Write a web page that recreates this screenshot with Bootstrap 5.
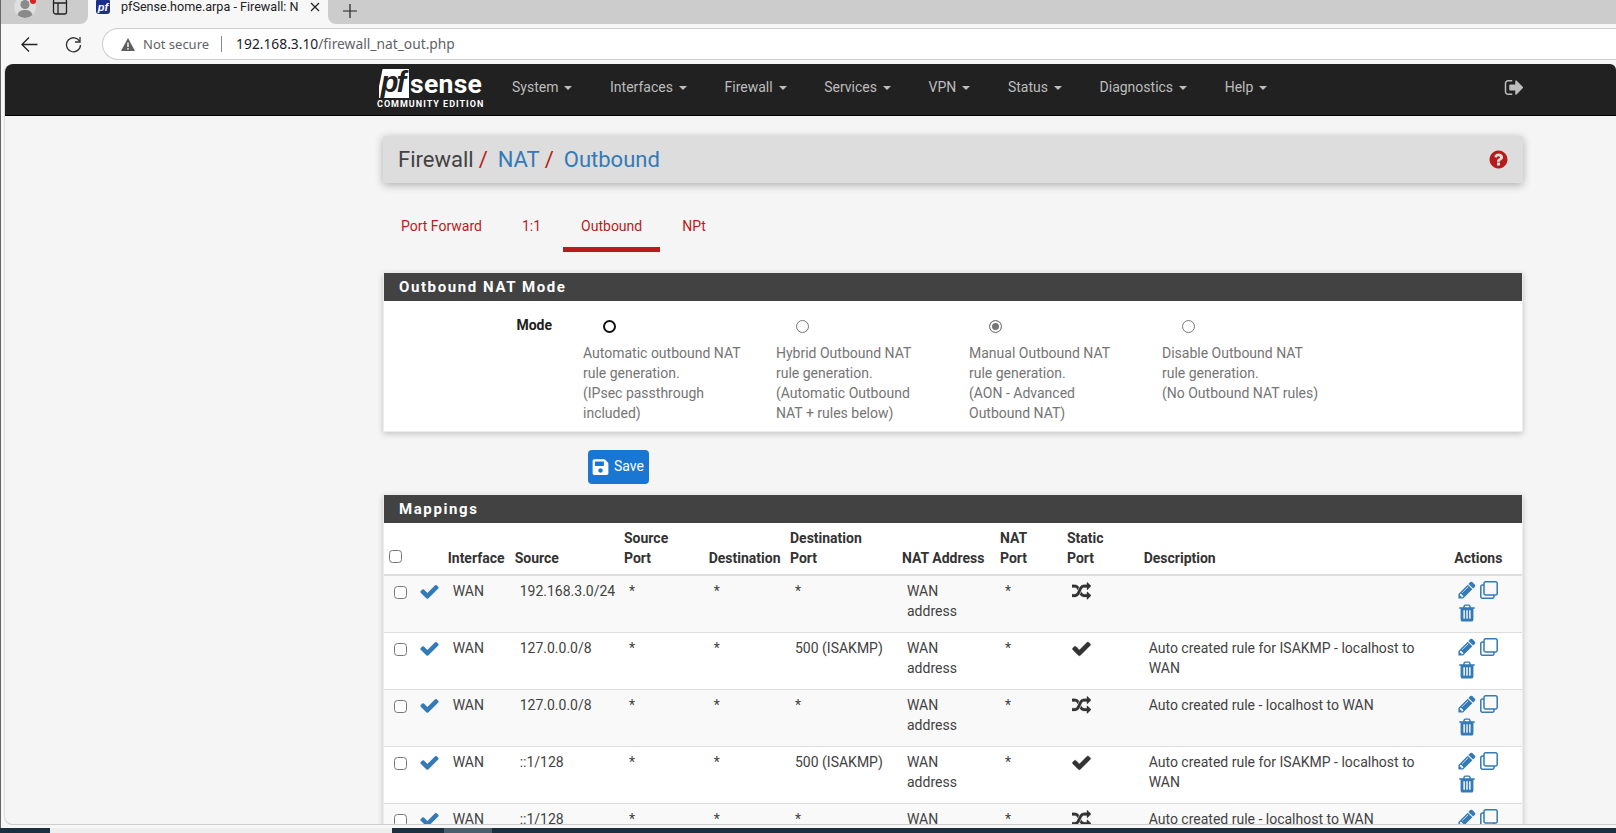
<!DOCTYPE html>
<html lang="en">
<head>
<meta charset="utf-8">
<title>pfSense.home.arpa - Firewall: NAT: Outbound</title>
<link href="https://cdn.jsdelivr.net/npm/bootstrap@5.3.0/dist/css/bootstrap.min.css" rel="stylesheet">
<style>
html,body{height:100%}
body{background:#f7f7f7;font-family:Roboto,"Liberation Sans",sans-serif;font-size:14px;line-height:20px;color:#424242;overflow:hidden}
.shell{height:833px;border-left:1px solid #666}
/* browser chrome */
.tabstrip{height:24px;background:#f7f7f7;flex:none}
.strip-left{width:87px;background:#ccc;border-bottom-right-radius:8px;position:relative;overflow:hidden}
.strip-right{background:#ccc;border-bottom-left-radius:8px;padding-left:15px}
.strip-tab{width:240px;padding-left:8px;font-family:Roboto,sans-serif;font-size:12.6px;line-height:14px;color:#222;height:14px}
.tab-fav{width:14px;height:14px;background:#1c2f86;border-radius:1px 1px 3px 3px;color:#fff;font:italic bold 11px/14px "Liberation Sans",sans-serif;text-align:center;margin-right:11px;flex:none}
.tab-title{width:177px;white-space:nowrap;overflow:hidden;margin-right:8px}
.avatar{position:absolute;left:12px;top:-4px}
.side-ico{position:absolute;left:51px;top:-3px}
.red-dot{position:absolute;left:29px;top:-2px;width:6px;height:6px;border-radius:50%;background:#e02020}
.toolbar{height:40px;padding-top:4px;flex:none;background:#f7f7f7}
.tool-ico{width:17px;height:17px;flex:none}
.tool-back{margin:0 27px 0 20px}
.urlpill{height:32px;flex:1;margin-left:20px;background:#fff;border:1px solid #ccc;border-right:0;border-radius:16px 0 0 16px;padding-left:18px;font-family:"Noto Sans","Open Sans",sans-serif;font-size:13px;color:#5f6368;white-space:nowrap}
.url-sep{width:1px;height:16px;background:#888;margin:0 14px 0 12px}
.url-path{font-size:13.8px}
.url-host{color:#1a1a2a}
/* page window */
.pagewin{flex:1;min-height:0;margin-left:4px;background:#f5f5f5;overflow:hidden;border-bottom:1px solid #ccc;border-radius:8px 0 0 8px;box-shadow:-1px 0 0 #ddd}
.pf-nav{height:52px;background:#212121;border-bottom:1px solid #000;padding:0;flex-wrap:nowrap;flex:none}
.pf-brand{width:106px;margin:0 0 0 372px;padding:0;color:#fff;display:block;flex:none}
.brand-top{height:29px;margin-top:-1px}
.pf-box{width:30px;height:29px;background:#fff;color:#212121;font:italic bold 29px/27px "Liberation Sans",sans-serif;letter-spacing:-2px;clip-path:polygon(12% 0,100% 0,100% 100%,0 100%,0 60%);text-align:center;padding-right:3px;margin-left:2px}
.pf-sense{font:700 26.5px/29px Roboto,sans-serif;color:#fff;letter-spacing:.3px;margin-left:1px}
.pf-edition{font:700 9px/10px Roboto,sans-serif;letter-spacing:1px;color:#fff;white-space:nowrap;margin-top:1px}
.pf-menu{margin:0 0 5px 29px;gap:37.6px;flex-direction:row}
.pf-menu .nav-link{color:#bdbdbd;padding:0;font-size:14px;white-space:nowrap}
.pf-menu .dropdown-toggle::after{margin-left:6px;vertical-align:2px;border-top-width:4px;border-right-width:4px;border-left-width:4px}
.pf-logout{position:absolute;left:1498.5px;top:13px}
.pf-main{width:1140px;margin-left:378px;padding-top:20px}
.crumbbar{height:47px;background:#ddd;box-shadow:0 2px 8px rgba(0,0,0,.3);padding:0 15px;font-size:22px;border-radius:2px}
.crumb-sep{color:#b71c1c;margin:0 10px 0 5px}
.crumbbar a{color:#337ab7;text-decoration:none}
.help-ico{margin-right:-1px}
.pf-tabs{margin-top:19px;gap:4px;height:50px;border:0}
.pf-tabs .nav-link{color:#b71c1c;padding:14px 18px 0;height:50px;font-size:14px;border-radius:0}
.pf-tabs .nav-link.active{border-bottom:5px solid #b71c1c;color:#b71c1c;background:none}
.pf-panel{border:1px solid #ececec;border-radius:0;background:#fff;box-shadow:0 2px 6px rgba(0,0,0,.2)}
.pf-head{height:28px;background:#424242;color:#fff;font-weight:700;font-size:15px;line-height:28px;letter-spacing:1.6px;padding:0 0 0 15px;border:0;border-radius:0!important}
.mode-panel{margin-top:20px}
.mode-body{height:130px;padding:14px 0 0}
.mode-label{width:168px;text-align:right;font-weight:700;color:#212121;line-height:20px;flex:none}
.mode-opts{margin-left:31px}
.mode-col{width:193px;color:#757575;font-size:14px;white-space:nowrap}
.mode-radio{display:block;width:13px;height:13px;margin:5px 0 10px 20px;border:1px solid #767676;background-color:#fff;float:none}
.mode-radio:checked{background-color:#777;background-image:none;border-color:#777;box-shadow:inset 0 0 0 2px #fff}
.radio-focus{border:2px solid #111}
.save-row{margin:18px 0 10px 205px;height:34px}
.save-btn{width:61px;height:34px;background:#1976d2;border:0;border-radius:4px;padding:0 0 0 4px;gap:5px;font-size:14px;color:#fff}
.save-btn span{margin-top:-2px}
.map-table{table-layout:fixed;margin:0;width:1138px;color:#424242;--bs-table-striped-bg:#f9f9f9;--bs-table-striped-color:#424242;--bs-table-color:#424242;font-size:14px}
.map-table th{vertical-align:bottom;padding:5px 0 6px 5px;border-bottom:2px solid #ddd;color:#333;font-weight:700;height:51px;font-size:14px}
.map-table td{vertical-align:top;padding:5px 0 0 10px;border-bottom:1px solid #ddd;height:57px}
.map-table input{display:block;width:13px;height:13px;margin:0;border:1px solid #767676;border-radius:2.5px;float:none}
.map-table th input{margin:0 0 5px 0}
.map-table td input{margin-top:5px}
.wc1{width:26.6px}.wc2{width:32.1px}.wc3{width:67px}.wc4{width:109.3px}.wc5{width:84.7px}.wc6{width:81.3px}.wc7{width:112px}.wc8{width:98px}.wc9{width:67px}.wc10{width:76.7px}.wc11{width:310.6px}.wc12{width:72.7px}
.act-wrap{width:46px;gap:3px 3px}
.act-wrap .copy-ico{align-self:center}
.icn-blue{color:#337ab7;fill:currentColor}
.icn-dark{color:#333;fill:currentColor;stroke:currentColor;stroke-width:25}
.taskbar{height:5px;background:#1b2f3f;flex:none;margin:3px 0 0 -1px;position:relative}
.task-win{margin-left:50px;width:342px;background:#eee}
.task-act{margin-left:52px;width:48px;background:#4a5f6b}
.map-table td.chk-cell{padding-left:10px}
.map-table td.ok-cell{padding:5px 0 0 8.6px}
.map-table td.act-cell{padding:4px 0 0 8px}
.map-table td.sp-cell{padding:5px 0 0 8.6px}
.map-table td.sr-cell{padding:6px 0 0 9.7px}
.map-table td.desc-cell{padding-right:14px}
</style>
</head>
<body class="m-0">
<svg width="0" height="0" class="position-absolute">
<defs>
<symbol id="i-check" viewBox="0 0 1792 1792"><path d="M1671 566q0 40-28 68l-724 724-136 136q-28 28-68 28t-68-28l-136-136-362-362q-28-28-28-68t28-68l136-136q28-28 68-28t68 28l294 295 656-657q28-28 68-28t68 28l136 136q28 28 28 68z"/></symbol>
<symbol id="i-random" viewBox="0 0 1792 1792"><path d="M666 481q-60 92-137 273-22-45-37-72.5t-40.5-63.5-51-56.5-63-35-81.5-14.5h-224q-14 0-23-9t-9-23v-192q0-14 9-23t23-9h224q250 0 410 225zm1126 799q0 14-9 23l-320 320q-9 9-23 9-13 0-22.5-9.5t-9.5-22.5v-192q-32 0-85 .5t-81 1-73-1-71-5-64-10.5-63-18.5-58-28.5-59-40-55-53.5-56-69.5q59-93 136-273 22 45 37 72.5t40.5 63.5 51 56.5 63 35 81.5 14.5h256v-192q0-14 9-23t23-9q12 0 24 10l319 319q9 9 9 23zm0-896q0 14-9 23l-320 320q-9 9-23 9-13 0-22.5-9.5t-9.5-22.5v-192h-256q-48 0-87 15t-69 45-51 61.5-45 77.5q-32 62-78 171-29 66-49.5 111t-54 105-64 100-74 83-90 68.5-106.5 42-128 16.5h-224q-14 0-23-9t-9-23v-192q0-14 9-23t23-9h224q48 0 87-15t69-45 51-61.5 45-77.5q32-62 78-171 29-66 49.5-111t54-105 64-100 74-83 90-68.5 106.5-42 128-16.5h256v-192q0-14 9-23t23-9q12 0 24 10l319 319q9 9 9 23z"/></symbol>
<symbol id="i-pencil" viewBox="0 0 1792 1792"><path d="M491 1536l91-91-235-235-91 91v107h128v128h107zm523-928q0-22-22-22-10 0-17 7l-542 542q-7 7-7 17 0 22 22 22 10 0 17-7l542-542q7-7 7-17zm-54-192l416 416-832 832h-416v-416zm683 96q0 53-37 90l-166 166-416-416 166-165q36-38 90-38 53 0 91 38l235 234q37 39 37 91z"/></symbol>
<symbol id="i-clone" viewBox="0 0 18 18"><path fill="none" stroke="currentColor" stroke-width="1.5" d="M5.500.8h10.200a1.500 1.500 0 0 1 1.500 1.500v10.200a1.500 1.500 0 0 1-1.500 1.500H5.500a1.500 1.500 0 0 1-1.500-1.500V2.300A1.500 1.500 0 0 1 5.500.8z"/><path fill="none" stroke="currentColor" stroke-width="1.5" d="M4 4H2.300A1.500 1.500 0 0 0 .8 5.500v10.200a1.500 1.500 0 0 0 1.500 1.500h10.200a1.500 1.500 0 0 0 1.500-1.500V14"/></symbol>
<symbol id="i-trash" viewBox="0 0 1792 1792"><path d="M704 1376v-704q0-14-9-23t-23-9h-64q-14 0-23 9t-9 23v704q0 14 9 23t23 9h64q14 0 23-9t9-23zm256 0v-704q0-14-9-23t-23-9h-64q-14 0-23 9t-9 23v704q0 14 9 23t23 9h64q14 0 23-9t9-23zm256 0v-704q0-14-9-23t-23-9h-64q-14 0-23 9t-9 23v704q0 14 9 23t23 9h64q14 0 23-9t9-23zm-544-992h448l-48-117q-7-9-17-11h-317q-10 2-17 11zm928 32v64q0 14-9 23t-23 9h-96v948q0 83-47 143.500t-113 60.500h-832q-66 0-113-58.500t-47-141.500v-952h-96q-14 0-23-9t-9-23v-64q0-14 9-23t23-9h309l70-167q15-37 54-63t79-26h320q40 0 79 26t54 63l70 167h309q14 0 23 9t9 23z"/></symbol>
</defs>
</svg>
<div class="shell d-flex flex-column">
  <div class="tabstrip d-flex overflow-hidden">
    <div class="strip-left">
      <svg class="avatar" width="24" height="22" viewBox="0 0 24 22"><circle cx="12" cy="11" r="11" fill="#dedede"/><circle cx="12" cy="8.500" r="4.500" fill="#8a8a8a"/><path d="M4.500 19c1-4 4-5 7.500-5s6.500 1 7.500 5a11 11 0 0 1-15 0z" fill="#8a8a8a"/></svg>
      <span class="red-dot"></span>
      <svg class="side-ico" width="16" height="18" viewBox="0 0 16 18" fill="none" stroke="#222" stroke-width="1.300"><rect x="1.500" y="2" width="13" height="15" rx="2"/><path d="M6 6v11M1.500 6H14.500"/></svg>
    </div>
    <div class="strip-tab d-flex align-items-center">
      <span class="tab-fav">pf</span>
      <span class="tab-title">pfSense.home.arpa - Firewall: NAT</span>
      <svg width="10" height="10" viewBox="0 0 10 10" fill="none" stroke="#222" stroke-width="1.200" class="ms-1"><path d="M1 1l8 8M9 1l-8 8"/></svg>
    </div>
    <div class="strip-right flex-grow-1">
      <svg width="14" height="14" viewBox="0 0 14 14" fill="none" stroke="#222" stroke-width="1.200"><path d="M7 0v14M0 7h14"/></svg>
    </div>
  </div>
  <div class="toolbar d-flex align-items-start">
    <div class="d-flex align-items-center w-100">
      <svg class="tool-ico tool-back" viewBox="0 0 17 17" fill="none" stroke="#222" stroke-width="1.300"><path d="M16.500 8.500H1M8 1.500L1 8.500l7 7"/></svg>
      <svg class="tool-ico" viewBox="0 0 17 17" fill="none" stroke="#333" stroke-width="1.300"><path d="M14.700 5.500A7 7 0 1 0 15.500 9"/><path d="M15 1v5h-5"/></svg>
      <div class="urlpill d-flex align-items-center">
        <svg width="14" height="13" viewBox="0 0 14 13" class="me-2 flex-shrink-0"><path d="M7 0l7 13H0z" fill="#5f5f5f"/><path d="M6.300 4.500h1.400v4.500H6.300zM6.300 10h1.400v1.400H6.300z" fill="#fff"/></svg>
        <span>Not secure</span><span class="url-sep"></span><span class="url-path"><span class="url-host">192.168.3.10</span>/firewall_nat_out.php</span>
      </div>
    </div>
  </div>
  <div class="pagewin position-relative">
    <nav class="navbar pf-nav d-flex align-items-center justify-content-start rounded-top">
      <a class="navbar-brand pf-brand" href="#">
        <div class="brand-top d-flex align-items-center"><span class="pf-box">pf</span><span class="pf-sense">sense</span></div>
        <div class="pf-edition">COMMUNITY EDITION</div>
      </a>
      <ul class="navbar-nav pf-menu d-flex">
        <li class="nav-item dropdown"><a class="nav-link dropdown-toggle" href="#">System</a></li>
        <li class="nav-item dropdown"><a class="nav-link dropdown-toggle" href="#">Interfaces</a></li>
        <li class="nav-item dropdown"><a class="nav-link dropdown-toggle" href="#">Firewall</a></li>
        <li class="nav-item dropdown"><a class="nav-link dropdown-toggle" href="#">Services</a></li>
        <li class="nav-item dropdown"><a class="nav-link dropdown-toggle" href="#">VPN</a></li>
        <li class="nav-item dropdown"><a class="nav-link dropdown-toggle" href="#">Status</a></li>
        <li class="nav-item dropdown"><a class="nav-link dropdown-toggle" href="#">Diagnostics</a></li>
        <li class="nav-item dropdown"><a class="nav-link dropdown-toggle" href="#">Help</a></li>
      </ul>
      <svg class="pf-logout" width="21" height="21" viewBox="0 0 1792 1792" fill="#bdbdbd"><path d="M704 1440q0 4 1 20t.5 26.500-3 23.500-10 19.500-20.500 6.500h-320q-119 0-203.500-84.500t-84.500-203.500v-704q0-119 84.500-203.500t203.500-84.500h320q13 0 22.500 9.500t9.500 22.500q0 4 1 20t.5 26.500-3 23.500-10 19.500-20.500 6.500h-320q-66 0-113 47t-47 113v704q0 66 47 113t113 47h312l11.500 1 11.500 3 8 5.500 7 9 2 13.500zm928-544q0 26-19 45l-544 544q-19 19-45 19t-45-19-19-45v-288h-448q-26 0-45-19t-19-45v-384q0-26 19-45t45-19h448v-288q0-26 19-45t45-19 45 19l544 544q19 19 19 45z"/></svg>
    </nav>
    <main class="pf-main">
      <div class="crumbbar d-flex align-items-center justify-content-between">
        <div class="d-flex align-items-center"><span>Firewall</span><span class="crumb-sep">/</span><a href="#">NAT</a><span class="crumb-sep">/</span><a href="#">Outbound</a></div>
        <svg class="help-ico" width="21" height="21" viewBox="0 0 1792 1792" fill="#b71c1c"><path d="M1024 1376v-192q0-14-9-23t-23-9h-192q-14 0-23 9t-9 23v192q0 14 9 23t23 9h192q14 0 23-9t9-23zm256-672q0-88-55.500-163t-138.500-116-170-41q-243 0-371 213-15 24 8 42l132 100q7 6 19 6 16 0 25-12 53-68 86-92 34-24 86-24 48 0 85.500 26t37.500 59q0 38-20 61t-68 45q-63 28-115.500 86.500t-52.500 125.500v36q0 14 9 23t23 9h192q14 0 23-9t9-23q0-19 21.500-49.500t54.500-49.500q32-18 49-28.500t46-35 44.500-48 28-60.500 12.500-81zm384 192q0 209-103 385.500t-279.500 279.500-385.500 103-385.500-103-279.500-279.500-103-385.500 103-385.500 279.500-279.500 385.500-103 385.500 103 279.500 279.500 103 385.500z"/></svg>
      </div>
      <ul class="nav pf-tabs">
        <li class="nav-item"><a class="nav-link" href="#">Port Forward</a></li>
        <li class="nav-item"><a class="nav-link" href="#">1:1</a></li>
        <li class="nav-item"><a class="nav-link active" href="#">Outbound</a></li>
        <li class="nav-item"><a class="nav-link" href="#">NPt</a></li>
      </ul>
      <section class="card pf-panel mode-panel">
        <div class="card-header pf-head">Outbound NAT Mode</div>
        <div class="card-body mode-body d-flex">
          <div class="mode-label">Mode</div>
          <div class="mode-opts d-flex">
            <label class="mode-col"><input class="form-check-input mode-radio radio-focus" type="radio" name="mode">Automatic outbound NAT<br>rule generation.<br>(IPsec passthrough<br>included)</label>
            <label class="mode-col"><input class="form-check-input mode-radio" type="radio" name="mode">Hybrid Outbound NAT<br>rule generation.<br>(Automatic Outbound<br>NAT + rules below)</label>
            <label class="mode-col"><input class="form-check-input mode-radio" type="radio" name="mode" checked>Manual Outbound NAT<br>rule generation.<br>(AON - Advanced<br>Outbound NAT)</label>
            <label class="mode-col"><input class="form-check-input mode-radio" type="radio" name="mode">Disable Outbound NAT<br>rule generation.<br>(No Outbound NAT rules)</label>
          </div>
        </div>
      </section>
      <div class="save-row">
        <button class="btn btn-primary save-btn d-inline-flex align-items-center" type="button">
          <svg width="17" height="18" viewBox="0 0 448 512" fill="#fff"><path d="M433.941 129.941l-83.882-83.882A48 48 0 0 0 316.118 32H48C21.490 32 0 53.490 0 80v352c0 26.510 21.490 48 48 48h352c26.510 0 48-21.490 48-48V163.882a48 48 0 0 0-14.059-33.941zM224 416c-35.346 0-64-28.654-64-64 0-35.346 28.654-64 64-64s64 28.654 64 64c0 35.346-28.654 64-64 64zm96-304.520V212c0 6.627-5.373 12-12 12H76c-6.627 0-12-5.373-12-12V108c0-6.627 5.373-12 12-12h228.520c3.183 0 6.235 1.264 8.485 3.515l3.480 3.480A11.996 11.996 0 0 1 320 111.480z"/></svg>
          <span>Save</span>
        </button>
      </div>
      <section class="card pf-panel">
        <div class="card-header pf-head">Mappings</div>
        <table class="table table-striped map-table">
          <colgroup><col class="wc1"><col class="wc2"><col class="wc3"><col class="wc4"><col class="wc5"><col class="wc6"><col class="wc7"><col class="wc8"><col class="wc9"><col class="wc10"><col class="wc11"><col class="wc12"></colgroup>
          <thead><tr>
            <th><input class="form-check-input" type="checkbox"></th><th></th><th>Interface</th><th>Source</th><th>Source<br>Port</th><th>Destination</th><th>Destination<br>Port</th><th>NAT Address</th><th>NAT<br>Port</th><th>Static<br>Port</th><th>Description</th><th>Actions</th>
          </tr></thead>
          <tbody>
            <tr>
              <td class="chk-cell"><input class="form-check-input" type="checkbox"></td>
              <td class="ok-cell"><svg class="icn-blue d-block" width="21" height="21"><use href="#i-check"/></svg></td>
              <td>WAN</td><td>192.168.3.0/24</td><td>*</td><td>*</td><td>*</td><td>WAN<br>address</td><td>*</td>
              <td class="sr-cell"><svg class="icn-dark d-block" width="19" height="19"><use href="#i-random"/></svg></td>
              <td class="desc-cell"></td>
              <td class="act-cell"><div class="act-wrap d-flex flex-wrap"><svg class="icn-blue" width="20" height="20"><use href="#i-pencil"/></svg><svg class="icn-blue copy-ico" width="18" height="18"><use href="#i-clone"/></svg><svg class="icn-blue" width="20" height="20"><use href="#i-trash"/></svg></div></td>
            </tr>
            <tr>
              <td class="chk-cell"><input class="form-check-input" type="checkbox"></td>
              <td class="ok-cell"><svg class="icn-blue d-block" width="21" height="21"><use href="#i-check"/></svg></td>
              <td>WAN</td><td>127.0.0.0/8</td><td>*</td><td>*</td><td>500 (ISAKMP)</td><td>WAN<br>address</td><td>*</td>
              <td class="sp-cell"><svg class="icn-dark d-block" width="21" height="21"><use href="#i-check"/></svg></td>
              <td class="desc-cell">Auto created rule for ISAKMP - localhost to WAN</td>
              <td class="act-cell"><div class="act-wrap d-flex flex-wrap"><svg class="icn-blue" width="20" height="20"><use href="#i-pencil"/></svg><svg class="icn-blue copy-ico" width="18" height="18"><use href="#i-clone"/></svg><svg class="icn-blue" width="20" height="20"><use href="#i-trash"/></svg></div></td>
            </tr>
            <tr>
              <td class="chk-cell"><input class="form-check-input" type="checkbox"></td>
              <td class="ok-cell"><svg class="icn-blue d-block" width="21" height="21"><use href="#i-check"/></svg></td>
              <td>WAN</td><td>127.0.0.0/8</td><td>*</td><td>*</td><td>*</td><td>WAN<br>address</td><td>*</td>
              <td class="sr-cell"><svg class="icn-dark d-block" width="19" height="19"><use href="#i-random"/></svg></td>
              <td class="desc-cell">Auto created rule - localhost to WAN</td>
              <td class="act-cell"><div class="act-wrap d-flex flex-wrap"><svg class="icn-blue" width="20" height="20"><use href="#i-pencil"/></svg><svg class="icn-blue copy-ico" width="18" height="18"><use href="#i-clone"/></svg><svg class="icn-blue" width="20" height="20"><use href="#i-trash"/></svg></div></td>
            </tr>
            <tr>
              <td class="chk-cell"><input class="form-check-input" type="checkbox"></td>
              <td class="ok-cell"><svg class="icn-blue d-block" width="21" height="21"><use href="#i-check"/></svg></td>
              <td>WAN</td><td>::1/128</td><td>*</td><td>*</td><td>500 (ISAKMP)</td><td>WAN<br>address</td><td>*</td>
              <td class="sp-cell"><svg class="icn-dark d-block" width="21" height="21"><use href="#i-check"/></svg></td>
              <td class="desc-cell">Auto created rule for ISAKMP - localhost to WAN</td>
              <td class="act-cell"><div class="act-wrap d-flex flex-wrap"><svg class="icn-blue" width="20" height="20"><use href="#i-pencil"/></svg><svg class="icn-blue copy-ico" width="18" height="18"><use href="#i-clone"/></svg><svg class="icn-blue" width="20" height="20"><use href="#i-trash"/></svg></div></td>
            </tr>
            <tr>
              <td class="chk-cell"><input class="form-check-input" type="checkbox"></td>
              <td class="ok-cell"><svg class="icn-blue d-block" width="21" height="21"><use href="#i-check"/></svg></td>
              <td>WAN</td><td>::1/128</td><td>*</td><td>*</td><td>*</td><td>WAN<br>address</td><td>*</td>
              <td class="sr-cell"><svg class="icn-dark d-block" width="19" height="19"><use href="#i-random"/></svg></td>
              <td class="desc-cell">Auto created rule - localhost to WAN</td>
              <td class="act-cell"><div class="act-wrap d-flex flex-wrap"><svg class="icn-blue" width="20" height="20"><use href="#i-pencil"/></svg><svg class="icn-blue copy-ico" width="18" height="18"><use href="#i-clone"/></svg><svg class="icn-blue" width="20" height="20"><use href="#i-trash"/></svg></div></td>
            </tr>
          </tbody>
        </table>
      </section>
    </main>
  </div>
  <div class="taskbar d-flex"><div class="task-win"></div><div class="task-act"></div></div>
</div>
<script src="https://cdn.jsdelivr.net/npm/bootstrap@5.3.0/dist/js/bootstrap.bundle.min.js"></script>
</body>
</html>
